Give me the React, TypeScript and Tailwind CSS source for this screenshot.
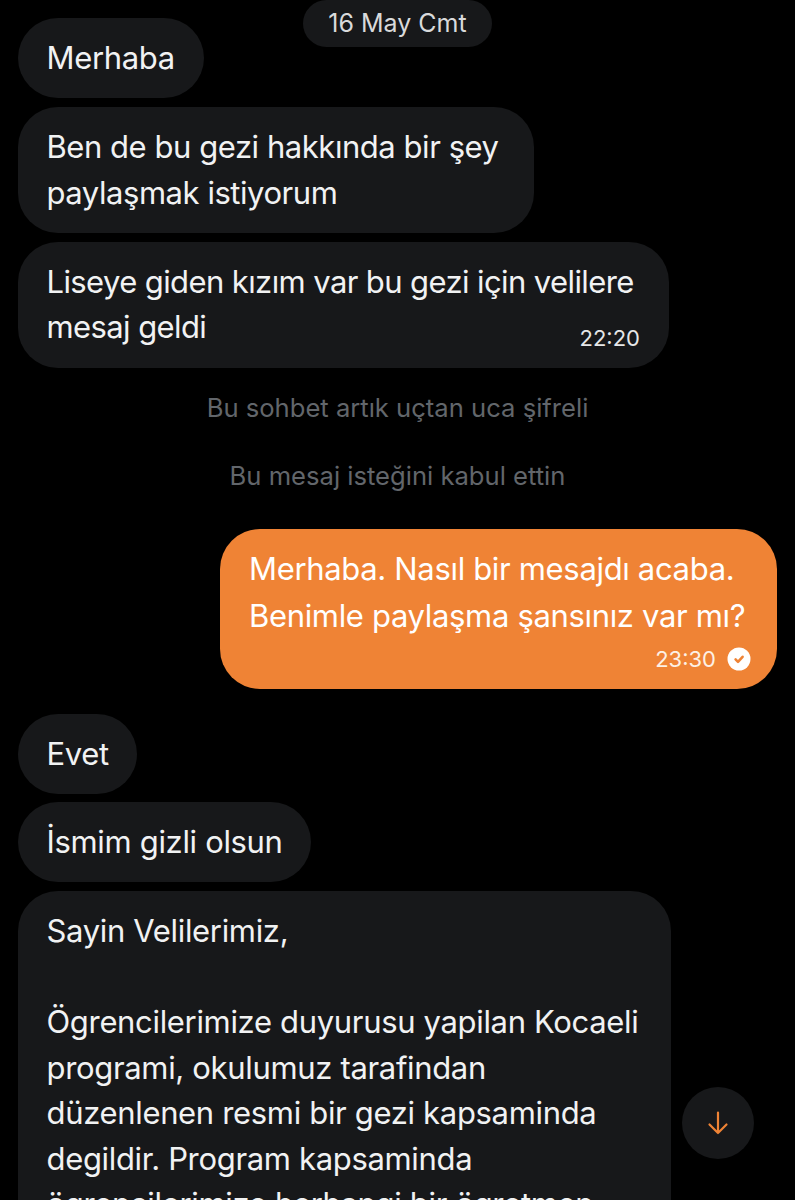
import type { ReactNode } from 'react'

const font = { fontFamily: 'Inter, sans-serif' }

type BubbleProps = {
	children: ReactNode
	time?: string
	className: string
}

const Bubble = ({ children, time, className }: BubbleProps) => (
	<div
		className={`rounded-[40px] bg-[#17181a] pt-[17px] pr-[29px] pb-[17.5px] pl-[28.5px] text-[31px] leading-[45.5px] whitespace-nowrap text-[#f1f2f3] ${className}`}
	>
		{children}
		{time && (
			<div className="-mt-[23px] mb-[2px] text-right text-[22px] leading-[22px] tracking-normal text-[#e6e7e8]">
				{time}
			</div>
		)}
	</div>
)

const Notice = ({ children, className }: { children: ReactNode; className: string }) => (
	<p className={`text-center text-[25.6px] leading-[32px] text-[#62666b] ${className}`}>
		{children}
	</p>
)

export default function App() {
	return (
		<div
			className="relative h-[1200px] w-[795px] overflow-hidden bg-black"
			style={font}
		>
			<div className="-mb-[29px] flex justify-center">
				<div className="h-[47px] w-[189px] rounded-full bg-[#17181a] text-center text-[25px] leading-[47px] text-[#d9dadb]">
					16 May Cmt
				</div>
			</div>

			<div className="flex flex-col gap-[9px] pl-[18px]">
				<Bubble className="w-[186px] tracking-[-0.33px]">Merhaba</Bubble>
				<Bubble className="w-[516px] tracking-[-0.45px]">
					Ben de bu gezi hakkında bir şey
					<br />
					paylaşmak istiyorum
				</Bubble>
				<Bubble
					className="w-[651px] tracking-[-0.6px]"
					time="22:20"
				>
					Liseye giden kızım var bu gezi için velilere
					<br />
					mesaj geldi
				</Bubble>
			</div>

			<Notice className="mt-[24px]">Bu sohbet artık uçtan uca şifreli</Notice>
			<Notice className="mt-[36px]">Bu mesaj isteğini kabul ettin</Notice>

			<div className="mt-[37px] flex justify-end pr-[18px]">
				<div className="w-[557px] rounded-[40px] bg-[#ef8335] px-[29px] pt-[16px] pb-[17px] text-[31px] leading-[47px] tracking-[-0.33px] whitespace-nowrap text-white">
					Merhaba. Nasıl bir mesajdı acaba.
					<br />
					Benimle paylaşma şansınız var mı?
					<div className="mt-[7px] -mr-[3px] flex items-center justify-end gap-[11px] text-[22px] leading-[26px] tracking-normal text-[#fdf0e5]">
						<span>23:30</span>
						<svg
							width="24"
							height="24"
							viewBox="0 0 24 24"
						>
							<circle
								cx="12"
								cy="12"
								r="11.5"
								fill="#ffffff"
							/>
							<path
								d="M8.6 12.4l2.4 2.4 4.6-5"
								fill="none"
								stroke="#ef8335"
								strokeWidth="2.6"
								strokeLinecap="round"
								strokeLinejoin="round"
							/>
						</svg>
					</div>
				</div>
			</div>

			<div className="mt-[25px] flex flex-col gap-[8px] pl-[18px]">
				<Bubble className="w-[119px] tracking-[-0.33px]">Evet</Bubble>
				<Bubble className="w-[293px] tracking-[-0.33px]">İsmim gizli olsun</Bubble>
				<Bubble className="mt-[1px] w-[653px] tracking-[-0.33px]">
					Sayin Velilerimiz,
					<br />
					<br />
					Ögrencilerimize duyurusu yapilan Kocaeli
					<br />
					programi, okulumuz tarafindan
					<br />
					düzenlenen resmi bir gezi kapsaminda
					<br />
					degildir. Program kapsaminda
					<br />
					ögrencilerimize herhangi bir ögretmen
				</Bubble>
			</div>

			<button className="absolute top-[1087px] left-[682px] flex h-[72px] w-[72px] items-center justify-center rounded-full bg-[#17181a]">
				<svg
					width="24"
					height="24"
					viewBox="0 0 24 24"
					fill="none"
					stroke="#ef8335"
					strokeWidth="2.2"
					strokeLinecap="round"
					strokeLinejoin="round"
				>
					<path d="M12 1.5V22M3.5 13.5 12 22l8.5-8.5" />
				</svg>
			</button>
		</div>
	)
}
